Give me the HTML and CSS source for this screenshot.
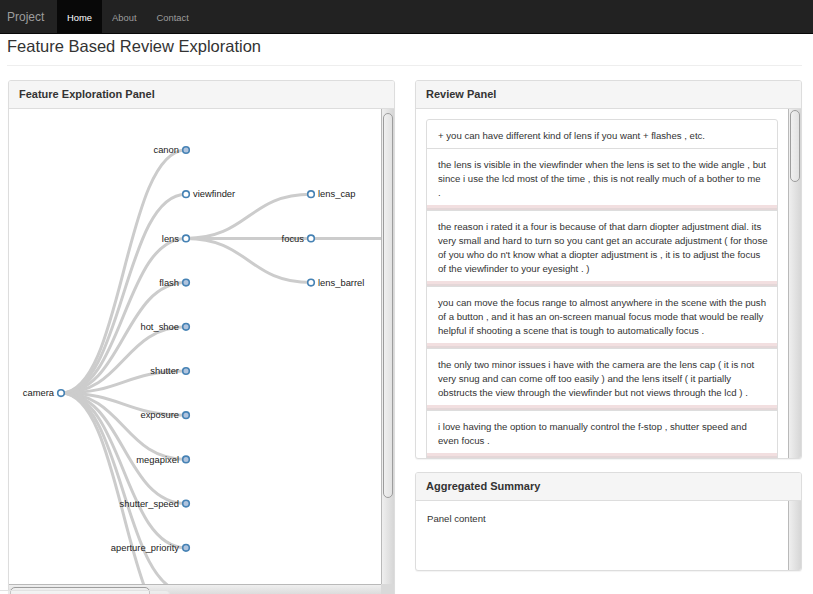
FILE: index.html
```html
<!DOCTYPE html>
<html>
<head>
<meta charset="utf-8">
<title>Feature Based Review Exploration</title>
<link rel="stylesheet" href="styles.css">
</head>
<body>
<nav class="navbar">
  <a class="brand">Project</a>
  <a class="nav-link active">Home</a>
  <a class="nav-link">About</a>
  <a class="nav-link">Contact</a>
</nav>
<div class="container">
  <div class="page-header"><h1>Feature Based Review Exploration</h1></div>
  <div class="row">
    <div class="col">
      <div class="panel">
        <div class="panel-heading">Feature Exploration Panel</div>
        <div class="panel-body tree-body">
          <div class="viewport">
            <svg class="tree" width="975" height="579" viewBox="0 0 975 579">
              <g class="links">
                <path d="M52,284.1C114.5,284.1 114.5,41 177,41"/>
                <path d="M52,284.1C114.5,284.1 114.5,85.2 177,85.2"/>
                <path d="M52,284.1C114.5,284.1 114.5,129.4 177,129.4"/>
                <path d="M52,284.1C114.5,284.1 114.5,173.6 177,173.6"/>
                <path d="M52,284.1C114.5,284.1 114.5,217.8 177,217.8"/>
                <path d="M52,284.1C114.5,284.1 114.5,262 177,262"/>
                <path d="M52,284.1C114.5,284.1 114.5,306.2 177,306.2"/>
                <path d="M52,284.1C114.5,284.1 114.5,350.4 177,350.4"/>
                <path d="M52,284.1C114.5,284.1 114.5,394.6 177,394.6"/>
                <path d="M52,284.1C114.5,284.1 114.5,438.8 177,438.8"/>
                <path d="M52,284.1C114.5,284.1 114.5,483 177,483"/>
                <path d="M52,284.1C114.5,284.1 114.5,527.2 177,527.2"/>
                <path d="M177,129.4C239.5,129.4 239.5,85.2 302,85.2"/>
                <path d="M177,129.4C239.5,129.4 239.5,129.4 302,129.4"/>
                <path d="M177,129.4C239.5,129.4 239.5,173.6 302,173.6"/>
                <path d="M302,129.4C364.5,129.4 364.5,129.4 427,129.4"/>
              </g>
              <g class="node" transform="translate(52,284.1)"><circle r="3.3"/><text x="-7" dy=".35em" text-anchor="end">camera</text></g>
              <g class="node collapsed" transform="translate(177,41)"><circle r="3.3"/><text x="-7" dy=".35em" text-anchor="end">canon</text></g>
              <g class="node" transform="translate(177,85.2)"><circle r="3.3"/><text x="7" dy=".35em">viewfinder</text></g>
              <g class="node" transform="translate(177,129.4)"><circle r="3.3"/><text x="-7" dy=".35em" text-anchor="end">lens</text></g>
              <g class="node collapsed" transform="translate(177,173.6)"><circle r="3.3"/><text x="-7" dy=".35em" text-anchor="end">flash</text></g>
              <g class="node collapsed" transform="translate(177,217.8)"><circle r="3.3"/><text x="-7" dy=".35em" text-anchor="end">hot_shoe</text></g>
              <g class="node collapsed" transform="translate(177,262)"><circle r="3.3"/><text x="-7" dy=".35em" text-anchor="end">shutter</text></g>
              <g class="node collapsed" transform="translate(177,306.2)"><circle r="3.3"/><text x="-7" dy=".35em" text-anchor="end">exposure</text></g>
              <g class="node collapsed" transform="translate(177,350.4)"><circle r="3.3"/><text x="-7" dy=".35em" text-anchor="end">megapixel</text></g>
              <g class="node collapsed" transform="translate(177,394.6)"><circle r="3.3"/><text x="-7" dy=".35em" text-anchor="end">shutter_speed</text></g>
              <g class="node collapsed" transform="translate(177,438.8)"><circle r="3.3"/><text x="-7" dy=".35em" text-anchor="end">aperture_priority</text></g>
              <g class="node collapsed" transform="translate(177,483)"><circle r="3.3"/><text x="-7" dy=".35em" text-anchor="end">battery</text></g>
              <g class="node collapsed" transform="translate(177,527.2)"><circle r="3.3"/><text x="-7" dy=".35em" text-anchor="end">zoom</text></g>
              <g class="node" transform="translate(302,85.2)"><circle r="3.3"/><text x="7" dy=".35em">lens_cap</text></g>
              <g class="node" transform="translate(302,129.4)"><circle r="3.3"/><text x="-7" dy=".35em" text-anchor="end">focus</text></g>
              <g class="node" transform="translate(302,173.6)"><circle r="3.3"/><text x="7" dy=".35em">lens_barrel</text></g>
              <g class="node" transform="translate(427,129.4)"><circle r="3.3"/><text x="7" dy=".35em">manual_focus</text></g>
            </svg>
          </div>
          <div class="vbar"><div class="thumb tree-vthumb"></div></div>
          <div class="hbar"><div class="hthumb"></div></div>
          <div class="corner"></div>
        </div>
      </div>
    </div>
    <div class="col">
      <div class="panel review-panel">
        <div class="panel-heading">Review Panel</div>
        <div class="panel-body review-body">
          <div class="viewport review-viewport">
            <div class="list-group">
              <div class="item"><p>+ you can have different kind of lens if you want + flashes , etc.</p></div>
              <div class="item"><p>the lens is visible in the viewfinder when the lens is set to the wide angle , but since i use the lcd most of the time , this is not really much of a bother to me<br>.</p><div class="strip neg"></div></div>
              <div class="item"><p>the reason i rated it a four is because of that darn diopter adjustment dial. its very small and hard to turn so you cant get an accurate adjustment ( for those of you who do n't know what a diopter adjustment is , it is to adjust the focus of the viewfinder to your eyesight . )</p><div class="strip neg"></div></div>
              <div class="item"><p>you can move the focus range to almost anywhere in the scene with the push of a button , and it has an on-screen manual focus mode that would be really helpful if shooting a scene that is tough to automatically focus .</p><div class="strip neg"></div></div>
              <div class="item"><p>the only two minor issues i have with the camera are the lens cap ( it is not very snug and can come off too easily ) and the lens itself ( it partially obstructs the view through the viewfinder but not views through the lcd ) .</p><div class="strip neg"></div></div>
              <div class="item"><p>i love having the option to manually control the f-stop , shutter speed and even focus .</p><div class="strip neg"></div></div>
              <div class="item"><p>the lens cap is attached with a small string so you wo n't lose it , but it tends to get in the way when you are shooting quickly .</p><div class="strip neg"></div></div>
              <div class="item"><p>focus is fast and accurate in good light , but in a dim room the lens hunts back and forth for a second or two before it locks on the subject .</p><div class="strip neg"></div></div>
              <div class="item"><p>my only complaint is that the lens barrel extends quite a bit when you zoom in , which makes the camera feel a little front heavy .</p><div class="strip neg"></div></div>
              <div class="item"><p>manual focus is possible but the focus ring is electronic , so it feels vague and it is hard to tell exactly when the image is sharp .</p><div class="strip neg"></div></div>
              <div class="item"><p>the lens cover sometimes does not open fully when the camera is turned on , and you get a dark corner in the picture until you tap it .</p><div class="strip neg"></div></div>
            </div>
          </div>
          <div class="vbar"><div class="thumb review-vthumb"></div></div>
        </div>
      </div>
      <div class="panel summary-panel">
        <div class="panel-heading">Aggregated Summary</div>
        <div class="panel-body summary-body">
          <div class="viewport summary-viewport">Panel content</div>
          <div class="vbar"></div>
        </div>
      </div>
    </div>
  </div>
</div>
<div class="tip"></div>
</body>
</html>
```
FILE: styles.css
```css
html, body {
  margin: 0;
  padding: 0;
  overflow: hidden;
}
body {
  position: relative;
  width: 813px;
  height: 594px;
  font-family: "Liberation Sans", Arial, sans-serif;
  font-size: 9.6px;
  line-height: 14px;
  color: #333;
  background: #fff;
}
.navbar {
  display: flex;
  height: 33px;
  background: #222;
  border-bottom: 1px solid #080808;
}
.brand {
  box-sizing: border-box;
  width: 57px;
  padding: 1px 0 0 7px;
  display: flex;
  align-items: center;
  font-size: 12px;
  color: #9d9d9d;
}
.nav-link {
  display: flex;
  align-items: center;
  padding: 2px 10px 0;
  color: #9d9d9d;
  font-size: 9.4px;
}
.nav-link.active {
  background: #080808;
  color: #fff;
}
.container {
  padding: 0 11px 0 7px;
}
.page-header {
  margin: 3px 0 14px;
  padding-bottom: 10px;
  border-bottom: 1px solid #eee;
}
.page-header h1 {
  margin: 0;
  font-size: 16.5px;
  line-height: 18px;
  font-weight: normal;
  color: #333;
}
.row {
  margin-left: 1px;
  display: grid;
  grid-template-columns: 1fr 1fr;
  column-gap: 20px;
  align-items: start;
}
.col {
  display: flex;
  flex-direction: column;
  min-width: 0;
}
.panel {
  background: #fff;
  border: 1px solid #ddd;
  border-radius: 3px;
  box-shadow: 0 1px 1px rgba(0, 0, 0, 0.05);
  overflow: hidden;
}
.panel-heading {
  height: 27px;
  line-height: 27px;
  padding: 0 10px;
  background: #f5f5f5;
  border-bottom: 1px solid #ddd;
  font-size: 11px;
  font-weight: bold;
  color: #333;
}
.panel-body {
  box-sizing: border-box;
}
.viewport {
  overflow: hidden;
  min-width: 0;
}
/* scrollbars */
.vbar {
  width: 13px;
  display: flex;
  flex-direction: column;
  align-items: flex-start;
  background: linear-gradient(to right, #b9b9b9 0, #b9b9b9 1px, #efefef 1px, #d6d6d6 100%);
}
.hbar {
  height: 13px;
  display: flex;
  background: linear-gradient(to bottom, #b9b9b9 0, #b9b9b9 1px, #efefef 1px, #d6d6d6 100%);
}
.corner {
  background: #d9d9d9;
}
.thumb {
  box-sizing: border-box;
  width: 10px;
  margin-left: 2px;
  border: 1px solid #9d9d9d;
  border-radius: 5px;
  background: linear-gradient(to right, #f0f0f0, #e2e2e2);
}
.hthumb {
  box-sizing: border-box;
  width: 140px;
  height: 12px;
  margin: 3px 0 0 1px;
  border: 1px solid #9d9d9d;
  border-radius: 5px;
  background: linear-gradient(to bottom, #f0f0f0, #e2e2e2);
}
/* tree */
.tree-body {
  height: 488px;
  display: grid;
  grid-template-columns: 1fr 13px;
  grid-template-rows: 1fr 13px;
}
.tree-vthumb {
  margin-top: 4px;
  height: 385px;
}
.tree {
  display: block;
}
.links path {
  fill: none;
  stroke: #ccc;
  stroke-width: 3px;
}
.node circle {
  fill: #fff;
  stroke: #4682b4;
  stroke-width: 1.6px;
}
.node.collapsed circle {
  fill: #b0c4de;
}
.node text {
  font-family: "Liberation Sans", Arial, sans-serif;
  font-size: 9.4px;
  fill: #222;
}
/* reviews */
.review-panel {
  margin-bottom: 13px;
}
.review-body {
  height: 349px;
  display: flex;
}
.review-viewport {
  flex: 1;
  padding: 10px 10px 0;
}
.review-vthumb {
  margin-top: 1px;
  height: 72px;
}
.list-group {
  display: flex;
  flex-direction: column;
}
.item {
  border: 1px solid #ddd;
  margin-bottom: -1px;
  background: #fff;
}
.item:first-child {
  border-radius: 3px 3px 0 0;
}
.item p {
  margin: 0;
  padding: 9px 9px 5px 11px;
}
.strip {
  height: 5px;
}
.strip.neg {
  background: linear-gradient(to bottom, #f2dfe0 0, #f2dfe0 3px, #e4d7d8 3px, #e4d7d8 5px);
}
/* summary */
.summary-body {
  height: 69px;
  display: flex;
}
.summary-viewport {
  flex: 1;
  padding: 11px 11px;
}
.tip {
  position: absolute;
  left: -4px;
  top: 590px;
  width: 172px;
  height: 20px;
  border: 1px solid #e2e2e2;
  border-radius: 4px;
  background: rgba(255, 255, 255, 0.4);
}
```
